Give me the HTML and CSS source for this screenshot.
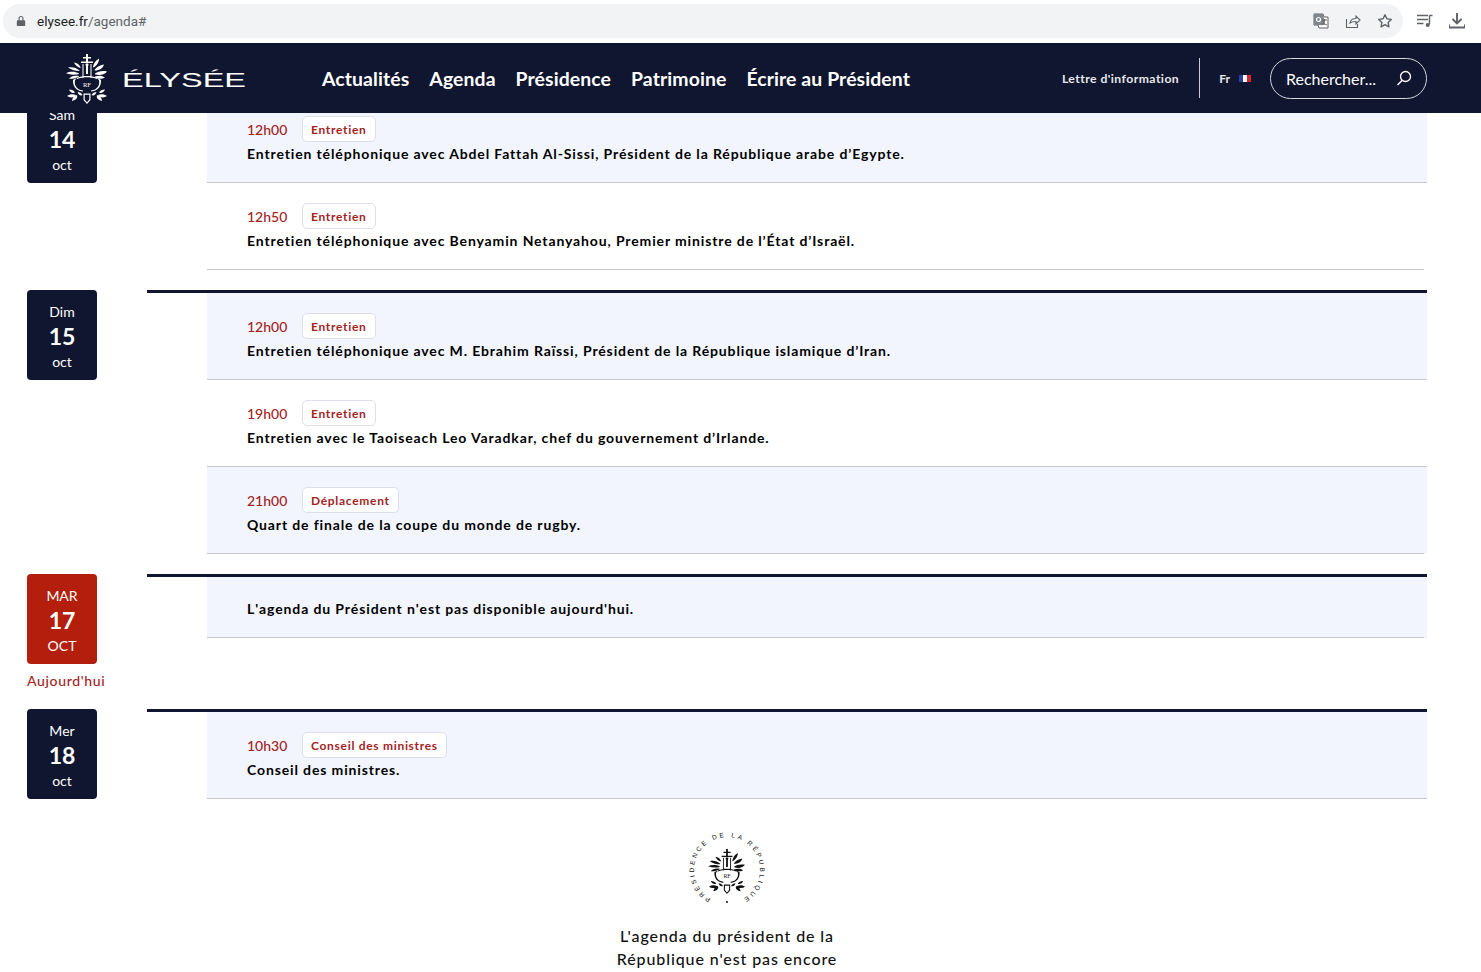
FILE: index.html
```html
<!DOCTYPE html>
<html lang="fr">
<head>
<meta charset="utf-8">
<title>Agenda | Élysée</title>
<link rel="stylesheet" href="styles.css">
</head>
<body>
<svg class="defs" width="0" height="0" aria-hidden="true">
  <symbol id="emblem" viewBox="0 0 42 50">
    <g fill="currentColor">
      <path d="M20 0h2v3h3v1.500h-3V8h-2V4.500h-3V3h3z"/>
      <path d="M15 7.500h12V9H15z"/>
      <path d="M16.500 10h1v14h-1zM24.500 10h1v14h-1zM20 12a1.500 1.500 0 1 1 2 0v8h-2z"/>
      <path d="M14.500 14c-3-1-5-2.500-6.500-5.500 3 .3 5.500 2 6.500 5zM13.500 17c-4 0-8-1-11.500-3.500 4-1 8.500 0 11.500 3zM13 20c-4 1-8.500 1-13-.7 4-2 9-2 13 .2zM13 22.500c-3 1.700-6 2.500-10 2.300 2-2.800 6-3.700 10-2.800z"/>
      <path d="M27 13c.5-3.500 2.500-6.500 6-8.500.3 3.500-2 7-5.500 9zM28.500 16c2-3 5-4.700 9.500-5.500-1 3.700-4.500 6-9 6zM29 19.500c3-2 7-3 12-2-2 3-7.500 4.500-12 2.700zM29 22.500c3.500-1 6.500-1 10 1-3 1.700-7 2-10-.3z"/>
      <path d="M7 26c0-.5 3-2 3.500-1.500.3.300-1.200 1-1.500 1.700-.8 3 .2 6.500 3 8.500 1.500 1 3.500 1.500 5 1.700v1.200c-2-.1-4.300-.7-6-2C8 33.500 6.700 29.500 7 26zM35 26c0-.5-3-2-3.500-1.500-.3.300 1.200 1 1.500 1.700.8 3-.2 6.500-3 8.500-1.500 1-3.500 1.500-5 1.700v1.200c2-.1 4.300-.7 6-2 3-2.100 4.300-6.100 4-9.600z"/>
      <path d="M11 24c3-1.500 6.500-2 10-2s7 .5 10 2v1c-3-1.300-6.500-1.800-10-1.800S14 23.700 11 25z"/>
      <path d="M3 35.500c3 0 5 1 6 3-2 1-5 0-6-3zM1 42c3-2 6-2 9-1-2 3-6 3-9 1zM6 47c0-3 2-5 5-6 1 3-1 5-5 6zM11.500 38c2 0 4 1 5 3-2 1-4 0-5-3z"/>
      <path d="M39 35.500c-3 0-5 1-6 3 2 1 5 0 6-3zM41 42c-3-2-6-2-9-1 2 3 6 3 9 1zM36 47c0-3-2-5-5-6-1 3 1 5 5 6zM30.500 38c-2 0-4 1-5 3 2 1 4 0 5-3z"/>
      <path d="M17.500 39.500h7V46L21 50l-3.500-4zm1.200 1.200v4.800l2.300 2.700 2.300-2.700v-4.800z"/>
    </g>
  </symbol>
</svg>

<div class="chrome">
  <div class="omnibox">
    <svg class="lock" viewBox="0 0 12 14" width="10" height="12"><path d="M3 6V4a3 3 0 0 1 6 0v2h1a1 1 0 0 1 1 1v5a1 1 0 0 1-1 1H2a1 1 0 0 1-1-1V7a1 1 0 0 1 1-1zm1.300 0h3.400V4a1.700 1.700 0 0 0-3.400 0z" fill="#5f6368"/></svg>
    <span class="url">elysee.fr<span class="url-path">/agenda#</span></span>
    <div class="omni-icons">
      <svg viewBox="0 0 16 16" width="16" height="16"><path d="M1 1h9l1 3h4v11H6l-1-3H1z" fill="#fff" stroke="#5f6368"/><path d="M1 1h9l2 11H1z" fill="#80868b"/><circle cx="5.500" cy="6.500" r="2" fill="none" stroke="#fff" stroke-width="1.200"/><path d="M9 7h5M11.500 6v1c0 2-1 4-3 5M10 8c.5 2 2 3.500 4 4" fill="none" stroke="#5f6368"/></svg>
      <svg viewBox="0 0 16 16" width="16" height="16"><path d="M1.500 6v8.500h11V11M5 10c.5-3 3-4.500 6-4.500V3l4 4-4 4V8.500c-2.500 0-4.500.3-6 1.500z" fill="none" stroke="#5f6368" stroke-width="1.100"/></svg>
      <svg viewBox="0 0 16 16" width="16" height="16"><path d="M8 1.800l1.900 4 4.400.6-3.200 3 .8 4.400L8 11.700l-3.900 2.100.8-4.400-3.200-3 4.400-.6z" fill="none" stroke="#5f6368" stroke-width="1.400" stroke-linejoin="round"/></svg>
    </div>
  </div>
  <div class="chrome-icons">
    <svg viewBox="0 0 16 14" width="16" height="14"><path d="M0 1.500h11M0 5.500h11M0 9.500h6.500M12.500 1.500h3M12.500 1.500v9" fill="none" stroke="#5f6368" stroke-width="1.400"/><circle cx="10.700" cy="11" r="2" fill="#5f6368"/></svg>
    <svg viewBox="0 0 16 16" width="16" height="16"><path d="M8 0v10M3.500 6L8 10.500 12.500 6M0 11.500v3h16v-3" fill="none" stroke="#5f6368" stroke-width="1.900"/></svg>
  </div>
</div>

<header class="site-header">
  <a class="brand">
    <svg class="brand-emblem" width="42" height="50" viewBox="0 0 42 50"><use href="#emblem" width="42" height="50"/><text class="emblem-rf" x="21" y="32.500" text-anchor="middle">RF</text></svg>
    <svg class="wordmark" width="125" height="24" viewBox="0 0 125 24"><text x="0" y="21" textLength="124" lengthAdjust="spacingAndGlyphs">ÉLYSÉE</text></svg>
  </a>
  <nav class="main-nav">
    <a>Actualités</a><a>Agenda</a><a>Présidence</a><a>Patrimoine</a><a>Écrire au Président</a>
  </nav>
  <div class="header-right">
    <a class="newsletter">Lettre d'information</a>
    <span class="divider"></span>
    <a class="lang">Fr</a>
    <span class="flag"><i class="flag-b"></i><i class="flag-w"></i><i class="flag-r"></i></span>
    <div class="search">
      <span>Rechercher...</span>
      <svg viewBox="0 0 16 16" width="16" height="16"><circle cx="9.500" cy="6.500" r="5" fill="none" stroke="#fff" stroke-width="1.300"/><path d="M6 10.500L1.500 15" stroke="#fff" stroke-width="1.500" fill="none"/></svg>
    </div>
  </div>
</header>

<main class="viewport">
  <div class="agenda">
    <section class="day">
      <div class="date-col"><div class="date"><span>Sam</span><b>14</b><span>oct</span></div></div>
      <div class="events">
        <article class="event tinted">
          <div class="meta"><time>12h00</time><span class="tag">Entretien</span></div>
          <p class="title">Entretien téléphonique avec Abdel Fattah Al-Sissi, Président de la République arabe d’Egypte.</p>
        </article>
        <article class="event short-rule">
          <div class="meta"><time>12h50</time><span class="tag">Entretien</span></div>
          <p class="title">Entretien téléphonique avec Benyamin Netanyahou, Premier ministre de l’État d’Israël.</p>
        </article>
      </div>
    </section>

    <section class="day">
      <div class="date-col"><div class="date"><span>Dim</span><b>15</b><span>oct</span></div></div>
      <div class="events">
        <article class="event tinted">
          <div class="meta"><time>12h00</time><span class="tag">Entretien</span></div>
          <p class="title">Entretien téléphonique avec M. Ebrahim Raïssi, Président de la République islamique d’Iran.</p>
        </article>
        <article class="event">
          <div class="meta"><time>19h00</time><span class="tag">Entretien</span></div>
          <p class="title">Entretien avec le Taoiseach Leo Varadkar, chef du gouvernement d’Irlande.</p>
        </article>
        <article class="event tinted short-rule">
          <div class="meta"><time>21h00</time><span class="tag">Déplacement</span></div>
          <p class="title">Quart de finale de la coupe du monde de rugby.</p>
        </article>
      </div>
    </section>

    <section class="day today">
      <div class="date-col"><div class="date"><span>MAR</span><b>17</b><span>OCT</span></div><div class="today-label">Aujourd'hui</div></div>
      <div class="events">
        <article class="event tinted short-rule empty">
          <p class="title">L'agenda du Président n'est pas disponible aujourd'hui.</p>
        </article>
      </div>
    </section>

    <section class="day">
      <div class="date-col"><div class="date"><span>Mer</span><b>18</b><span>oct</span></div></div>
      <div class="events">
        <article class="event tinted">
          <div class="meta"><time>10h30</time><span class="tag">Conseil des ministres</span></div>
          <p class="title">Conseil des ministres.</p>
        </article>
      </div>
    </section>
  </div>

  <footer class="closing">
    <svg class="seal" width="76" height="76" viewBox="0 0 76 76">
      <defs><path id="seal-ring" d="M38 71A33 33 0 1 1 38.100 71"/></defs>
      <text class="seal-text"><textPath href="#seal-ring" startOffset="17" textLength="172" lengthAdjust="spacing">PRÉSIDENCE DE LA RÉPUBLIQUE</textPath></text>
      <circle cx="38" cy="70" r="1" fill="#111"/>
      <svg x="19" y="17" width="38" height="45" viewBox="0 0 42 50"><use href="#emblem" width="42" height="50"/><text class="emblem-rf" x="21" y="32.500" text-anchor="middle">RF</text></svg>
    </svg>
    <p class="closing-text">L'agenda du président de la<br>République n'est pas encore</p>
  </footer>
</main>
</body>
</html>
```
FILE: styles.css
```css
* { box-sizing: border-box; }
html, body { margin: 0; height: 972px; overflow: hidden; background: #fff; }
body { font-family: Lato, "Noto Sans", sans-serif; color: #000; }
p { margin: 0; }
.defs { position: absolute; }
.emblem-rf { font: 400 6.500px "Liberation Serif", serif; fill: currentColor; }

.chrome { height: 43px; display: flex; align-items: flex-start; padding: 4px 0 0 3px; background: #fff; }
.omnibox { width: 1400px; height: 34px; border-radius: 17px; background: #f1f3f4; display: flex; align-items: center; padding: 0 10px 0 13px; }
.lock { margin-right: 11px; }
.url { font: 13.500px Roboto, sans-serif; color: #202124; }
.url-path { color: #5f6368; }
.omni-icons { margin-left: auto; display: flex; gap: 16px; align-items: center; }
.chrome-icons { display: flex; gap: 16px; align-items: center; margin: 9px 0 0 14px; }

.site-header { height: 70px; background: #10162f; color: #fff; display: flex; align-items: center; padding: 0 54px 0 66px; position: relative; z-index: 2; }
.brand { display: flex; align-items: center; gap: 14px; width: 256px; flex: none; }
.brand-emblem { color: #fff; margin-top: 1px; }
.wordmark text { font: 400 21px "Liberation Sans", sans-serif; fill: #fff; }
.main-nav { display: flex; gap: 20px; font-size: 19.400px; font-weight: 700; letter-spacing: .1px; padding-top: 1px; }
.header-right { margin-left: auto; display: flex; align-items: center; }
.newsletter { font-size: 12.200px; font-weight: 700; color: #e7e8ec; letter-spacing: .45px; }
.divider { width: 1px; height: 40px; background: #c9cbd3; margin: 0 19px 0 20px; }
.lang { font-size: 12px; font-weight: 700; color: #e7e8ec; }
.flag { display: flex; margin: 0 19px 0 9px; width: 12px; height: 7px; }
.flag i { flex: 1; }
.flag-b { background: #2a3f9c; }
.flag-w { background: #fff; }
.flag-r { background: #d5232f; }
.search { width: 157px; height: 41px; border: 1px solid #d6d8de; border-radius: 21px; display: flex; align-items: center; justify-content: space-between; padding: 0 14px 0 15px; font-size: 16px; }

.viewport { height: 859px; overflow: hidden; }
.agenda { margin-top: -20px; padding: 0 54px 0 27px; display: flex; flex-direction: column; gap: 20px; }
.day { display: flex; gap: 50px; }
.date-col { width: 70px; flex: none; }
.date { height: 90px; padding-top: 2px; border-radius: 4px; background: #10162f; color: #fff; display: flex; flex-direction: column; align-items: center; justify-content: center; font-size: 14px; line-height: 25px; }
.date b { font-size: 23px; font-weight: 700; }
.today .date { background: #b31f0c; }
.today-label { margin-top: 8px; width: 90px; font-size: 14px; line-height: 17px; font-weight: 500; color: #a5231e; letter-spacing: .66px; }

.events { flex: 1; border-top: 3px solid #10162f; padding-left: 60px; }
.event { height: 87px; padding: 20px 40px 0; border-bottom: 1px solid #c5c7cc; }
.tinted { background: #f2f5fd; }
.short-rule { margin-right: 3px; }
.short-rule.tinted { box-shadow: 3px 0 0 #f2f5fd; }
.empty { height: 61px; padding-top: 21px; }
.meta { display: flex; align-items: center; gap: 15px; height: 26px; margin-bottom: 1px; }
.meta time { font-size: 14px; color: #a5231e; font-weight: 500; width: 40px; }
.tag { height: 26px; padding: 0 8px; display: flex; align-items: center; background: #fff; border: 1px solid #dde0e9; border-radius: 5px; font-size: 12px; font-weight: 700; color: #a5231e; letter-spacing: .7px; }
.title { font-size: 14px; line-height: 22px; font-weight: 700; letter-spacing: .87px; color: #000; }
.empty .title { font-kerning: none; }

.closing { display: flex; flex-direction: column; align-items: center; margin-top: 33px; padding-right: 27px; color: #111; }
.seal { color: #111; }
.seal-text { font: 6.500px "Liberation Sans", sans-serif; fill: #111; }
.closing-text { margin-top: 16px; text-align: center; font-size: 16px; line-height: 23px; font-weight: 500; letter-spacing: .9px; }
```
